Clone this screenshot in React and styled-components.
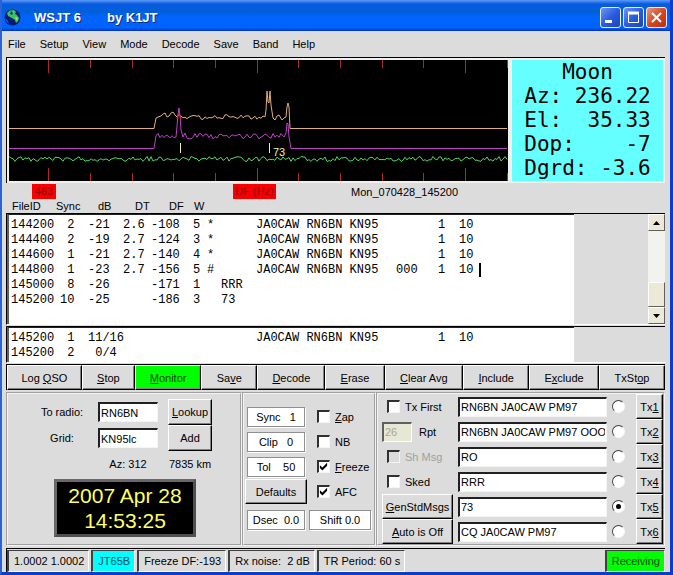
import React, { useState } from "react";
import styled, { createGlobalStyle } from "styled-components";

const GlobalStyle = createGlobalStyle`
    * {
        box-sizing: border-box;
    }

    body {
        margin: 0;
        background: #dcdcdc;
        font-family: "Liberation Sans", Arial, sans-serif;
        font-size: 11px;
        color: #000;
    }

    button, input {
        font: inherit;
        color: inherit;
        margin: 0;
    }
`

const Window = styled.div`
    display: flex;
    flex-direction: column;
    min-height: 100vh;
    background: #dcdcdc;
    border: solid #0c3cc8;
    border-width: 0 3px 4px 2px;
    border-left-color: #2a62d8;
`

const TitleBar = styled.header`
    display: flex;
    align-items: center;
    height: 31px;
    padding: 4px 3px 0 2px;
    background: linear-gradient(#5a9cf8 0, #0a5ae0 4px, #0060d8 12px, #0064ff 17px, #0062fc 28px, #0030b8 31px);
`

const Title = styled.h1`
    display: flex;
    flex: 1;
    gap: 26px;
    margin: 0 0 0 13px;
    color: #fff;
    font-size: 13px;
    line-height: 16px;
    text-shadow: 1px 1px #0a2a80;
`

const WinButtons = styled.div`
    display: flex;
    gap: 2px;
`

const WinButton = styled.button`
    display: flex;
    width: 21px;
    height: 21px;
    padding: 0;
    border: 1px solid #e8f0ff;
    border-radius: 3px;
    background: ${p => p.$close
        ? "linear-gradient(135deg, #e89880, #d84820 50%, #b83010)"
        : "linear-gradient(135deg, #7098f0, #2a5ce0 50%, #1c44b8)"};
`

const MenuBar = styled.nav`
    display: flex;
    gap: 14px;
    height: 26px;
    padding-left: 6px;
`

const MenuItem = styled.button`
    padding: 0;
    border: 0;
    background: none;
`

const Main = styled.main`
    display: flex;
    flex: 1;
    flex-direction: column;
    padding: 0 5px 0 4px;
`

const Sky = styled.section`
    display: flex;
    gap: 4px;
    padding: 2px;
    border-top: 1px solid #000;
    border-left: 1px solid #000;
    background: #f0f0ec;
`

const Spectrum = styled.div`
    flex: 1;
    height: 121px;
    overflow: hidden;
    background: #000;

    svg {
        display: block;
    }
`

const Moon = styled.div`
    width: 151px;
    background: #66ffff;
    font-family: "DejaVu Sans Mono", monospace;
    font-size: 21px;
    line-height: 24px;
    text-align: center;
    white-space: pre;
`

const PlotLabels = styled.div`
    display: flex;
    align-items: center;
    height: 17px;
    padding-left: 26px;
`

const RedLabel = styled.span`
    width: ${p => p.$width}px;
    margin-right: ${p => p.$after}px;
    background: #f80000;
    color: #900000;
    line-height: 15px;
    text-align: center;
`

const ColumnHeads = styled.div`
    display: grid;
    grid-template-columns: 44px 42px 37px 34px 25px 1fr;
    padding-left: 6px;
    line-height: 13px;
`

const TextBox = styled.div`
    display: flex;
    height: ${p => p.$height}px;
    border-top: 1px solid #000;
    border-left: 1px solid #000;
    border-bottom: 1px solid #fff;
    margin-bottom: 1px;
`

const TextArea = styled.div`
    width: 567px;
    padding: 3px 2px;
    border-top: 1px solid #202020;
    border-left: 2px solid #606060;
    background: #fff;
`

const Lines = styled.table`
    table-layout: fixed;
    border-collapse: collapse;
    width: 100%;
    font-family: "Liberation Mono", "Courier New", monospace;
    font-size: 12px;
    line-height: 15px;

    td {
        padding: 0;
        white-space: pre;
    }
`

const Caret = styled.span`
    display: inline-block;
    width: 2px;
    height: 14px;
    margin-left: 6px;
    background: #000;
    vertical-align: top;
`

const ScrollBar = styled.div`
    display: flex;
    flex-direction: column;
    width: 17px;
    margin-left: auto;
    background: #f2f2ee;
`

const ScrollPart = styled.button`
    display: flex;
    align-items: center;
    justify-content: center;
    height: ${p => p.$height}px;
    margin-top: ${p => p.$last ? "auto" : "0"};
    padding: 0;
    border: 1px solid;
    border-color: #fff #606060 #606060 #fff;
    background: #ece9d8;
`

const ButtonBar = styled.div`
    display: flex;
    height: 26px;
    margin-bottom: 2px;
    border-top: 1px solid #000;
    border-left: 1px solid #000;
`

const Button = styled.button`
    padding: 0;
    border: 1px solid;
    border-color: #fff #000 #000 #fff;
    box-shadow: inset -1px -1px #808080;
    background: #dcdcdc;
    white-space: nowrap;
`

const BarButton = styled(Button)`
    flex: ${p => p.$grow} 1 0;
    background: ${p => p.$on ? "#00ff00" : "#dcdcdc"};
    color: ${p => p.$on ? "#004800" : "#000"};
`

const Panels = styled.div`
    display: grid;
    grid-template-columns: 236fr 134fr 289fr;
    margin-bottom: 2px;
`

const Panel = styled.section`
    min-width: 0;
    border: 2px groove #f4f4f4;
`

const StationGrid = styled.div`
    display: grid;
    grid-template-columns: 52px 60px 44px;
    grid-auto-rows: 26px;
    gap: 0 10px;
    align-items: center;
    justify-content: center;
    justify-items: center;
    padding-top: 5px;

    ${Button} {
        width: 44px;
        height: 26px;
    }
`

const Entry = styled.input`
    width: 100%;
    min-width: 0;
    height: 20px;
    padding: 0 1px;
    border: solid;
    border-width: 2px 1px 1px 2px;
    border-color: #202020 #f4f4f4 #f4f4f4 #202020;
    border-radius: 0;
    background: #fff;

    &:disabled {
        border-color: #606060 #fff #fff #606060;
        background: #e8e6d4;
        color: #a8a698;
    }
`

const Clock = styled.time`
    display: block;
    width: 142px;
    margin: 2px auto 0 46px;
    padding: 1px 0;
    border: 3px solid;
    border-color: #686868 #505050 #505050 #686868;
    background: #000;
    color: #ffff66;
    font-size: 21px;
    line-height: 25px;
    text-align: center;
`

const DecodeGrid = styled.div`
    display: grid;
    grid-template-columns: 62px 1fr;
    grid-auto-rows: 25px;
    column-gap: 5px;
    align-items: center;
    padding: 10px 1px 0 1px;

    ${Button} {
        height: 25px;
    }
`

const Readout = styled.div`
    margin: 0 2px;
    border: 1px solid #909090;
    box-shadow: 1px 1px #fff;
    background: #fff;
    line-height: 18px;
    text-align: center;
    white-space: pre;
`

const BottomPair = styled.div`
    display: grid;
    grid-template-columns: 62px 1fr;
    padding: 6px 1px;
`

const CheckLabel = styled.label`
    display: flex;
    align-items: center;
    gap: 5px;
    padding-left: 5px;
    white-space: nowrap;
    color: ${p => p.$off ? "#a0a0a0" : "#000"};
`

const CheckBox = styled.input.attrs({ type: "checkbox" })`
    appearance: none;
    display: flex;
    width: 13px;
    height: 13px;
    border: solid;
    border-width: 2px 1px 1px 2px;
    border-color: #303030 #f4f4f4 #f4f4f4 #303030;
    background: #fff;

    &:disabled {
        background: #dcdcdc;
    }

    &:checked::after {
        content: "";
        width: 9px;
        height: 9px;
        background: #000;
        clip-path: polygon(10% 35%, 38% 60%, 90% 8%, 90% 42%, 38% 95%, 10% 68%);
    }
`

const Radio = styled.input.attrs({ type: "radio" })`
    appearance: none;
    display: flex;
    align-items: center;
    justify-content: center;
    width: 13px;
    height: 13px;
    border: 1px solid;
    border-color: #404040 #f8f8f8 #f8f8f8 #404040;
    border-radius: 50%;
    background: #fff;

    &:checked::after {
        content: "";
        width: 5px;
        height: 5px;
        border-radius: 50%;
        background: #000;
    }
`

const TxGrid = styled.div`
    display: grid;
    grid-template-columns: 71px 1fr 19px 27px;
    grid-auto-rows: 25px;
    column-gap: 5px;
    align-items: center;
    padding-left: 4px;

    ${Button} {
        height: 25px;
    }
`

const Report = styled.label`
    display: flex;
    align-items: center;
    gap: 7px;

    ${Entry} {
        width: 30px;
    }
`

const StatusBar = styled.footer`
    display: flex;
    gap: 2px;
    height: 24px;
    padding-top: 1px;
    border-top: 1px solid #000;
    border-left: 1px solid #000;
`

const StatusCell = styled.div`
    padding: 0 4px 0 5px;
    margin-left: ${p => p.$last ? "auto" : "0"};
    border: solid;
    border-width: 1px 1px 1px 2px;
    border-color: #404040 #fff #fff #404040;
    background: ${p => p.$color || "#dcdcdc"};
    color: ${p => p.$ink || "#000"};
    line-height: 20px;
    white-space: pre;
`

const menus = ["File", "Setup", "View", "Mode", "Decode", "Save", "Band", "Help"]

const widths = [49, 28, 35, 28, 42, 14, 14, 35, 140, 42, 21]

const decodes = [
    ["144200", " 2", "-21", "2.6", "-108", "5", "*", "", "JA0CAW RN6BN KN95", "", "1", "10"],
    ["144400", " 2", "-19", "2.7", "-124", "3", "*", "", "JA0CAW RN6BN KN95", "", "1", "10"],
    ["144600", " 1", "-21", "2.7", "-140", "4", "*", "", "JA0CAW RN6BN KN95", "", "1", "10"],
    ["144800", " 1", "-23", "2.7", "-156", "5", "#", "", "JA0CAW RN6BN KN95", "000", "1", "10"],
    ["145000", " 8", "-26", "", "-171", "1", "", "RRR", "", "", "", ""],
    ["145200", "10", "-25", "", "-186", "3", "", "73", "", "", "", ""],
]

const averages = [
    ["145200", " 1", "11/16", "", "", "", "", "", "JA0CAW RN6BN KN95", "", "1", "10"],
    ["145200", " 2", " 0/4", "", "", "", "", "", "", "", "", ""],
]

// label, underlined letter index, share of the bar
const actions = [
    ["Log QSO", 4, 75],
    ["Stop", 0, 53],
    ["Monitor", 0, 66],
    ["Save", 2, 56],
    ["Decode", 0, 68],
    ["Erase", 0, 59],
    ["Clear Avg", 0, 79],
    ["Include", 0, 66],
    ["Exclude", 1, 70],
    ["TxStop", 4, 66],
]

const messages = ["RN6BN JA0CAW PM97", "RN6BN JA0CAW PM97 OOO", "RO", "RRR", "73", "CQ JA0CAW PM97"]

const ticks = [39, 81, 123, 164, 206, 248, 289, 331, 373, 414, 456, 498]

// repeatable noise so the traces don't jump on every render
const trace = (from, to, level, amp, seed) => {
    let n = seed
    const pts = []
    for (let x = from; x <= to; x += 2) {
        n = (n * 16807) % 2147483647
        pts.push(`${x},${(level + (n / 2147483647 - 0.5) * amp).toFixed(1)}`)
    }
    return pts.join(" ")
}

const orange = `0,68.5 145,68.5 147,58 149,57 152,56 154,54 156,53 158,57 160,56 162,53 164,52 166,55 168,57 ${trace(170, 256, 57, 5, 71)} 257,50 258,31 259,42 260,43 261,31 262,45 264,58 266,60 268,56 270,55 273,60 275,58 277,57 278,47 279,43 280,47 281,68.5 498,68.5`
const magenta = `0,88.5 145,88.5 147,76 ${trace(149, 165, 76, 5, 911)} 167,77 168,66 169,55 170,48 171,56 172,70 174,77 ${trace(176, 272, 76, 6, 37)} 275,77 277,73 278,63 279,64 280,77 282,88.5 498,88.5`

const Underlined = ({ text, at }) => (
    <>{text.slice(0, at)}<u>{text[at]}</u>{text.slice(at + 1)}</>
)

const Globe = () => (
    <svg width="17" height="17" viewBox="0 0 17 17" aria-hidden="true">
        <circle cx="8.5" cy="8.5" r="8" fill="#0a1a70" />
        <path d="M1 9 L4 12 L5 15 L2 12Z" fill="#2858d8" />
        <path d="M3 4 L6 1.5 L10 1 L12 3 L11 5 L13 6 L15 9 L14 12 L12 14 L11 11 L8 9 L6 8 L4 7Z" fill="#38c858" />
        <path d="M7 2 L9 4 L8 6 L6 5Z" fill="#0a3a90" />
        <path d="M12 8 L14 9 L13 12 L11 9Z" fill="#80e890" />
    </svg>
)

const SpectrumPlot = () => (
    <Spectrum>
        <svg width="500" height="121" viewBox="0 0 500 121" fill="none">
            {ticks.map((x, i) => {
                const len = i % 5 === 0 ? 13 : 8
                return <path key={x} d={`M${x}.5 0v${len}M${x}.5 ${121 - len}v${len}`} stroke="#b02820" />
            })}
            <polyline points={trace(0, 498, 99, 5, 1234)} stroke="#50d860" />
            <polyline points={orange} stroke="#e0b078" />
            <polyline points={magenta} stroke="#c040c8" />
            <path d="M168 59L169 55H171L172 59" stroke="#e03028" />
            <path d="M171.5 83v10M260.5 83v10" stroke="#f0f0b0" />
            <text x="264" y="96" fill="#f0f0b0" fontSize="11">73</text>
        </svg>
    </Spectrum>
)

const LineTable = ({ rows, caretRow }) => (
    <Lines>
        <colgroup>
            {widths.map((w, i) => <col key={i} style={{ width: w }} />)}
            <col />
        </colgroup>
        <tbody>
            {rows.map((row, i) => (
                <tr key={i}>
                    {row.map((cell, j) => (
                        <td key={j}>{cell}{i === caretRow && j === row.length - 1 && <Caret />}</td>
                    ))}
                </tr>
            ))}
        </tbody>
    </Lines>
)

const Check = ({ text, at, checked, disabled }) => (
    <CheckLabel $off={disabled}>
        <CheckBox defaultChecked={checked} disabled={disabled} />
        <span>{at === undefined ? text : <Underlined text={text} at={at} />}</span>
    </CheckLabel>
)

const TxPanel = () => {
    const [next, setNext] = useState(4)

    const left = [
        <Check text="Tx First" />,
        <Report><Entry defaultValue="26" disabled />Rpt</Report>,
        <Check text="Sh Msg" disabled />,
        <Check text="Sked" />,
        <Button><Underlined text="GenStdMsgs" at={0} /></Button>,
        <Button><Underlined text="Auto is Off" at={0} /></Button>,
    ]

    return (
        <Panel>
            <TxGrid>
                {messages.map((msg, i) => (
                    <React.Fragment key={i}>
                        {left[i]}
                        <Entry defaultValue={msg} aria-label={`Message ${i + 1}`} />
                        <Radio name="tx" checked={next === i} onChange={() => setNext(i)} aria-label={`Send Tx${i + 1} next`} />
                        <Button><Underlined text={`Tx${i + 1}`} at={2} /></Button>
                    </React.Fragment>
                ))}
            </TxGrid>
        </Panel>
    )
}

const App = () => {
    return (
        <Window>
            <GlobalStyle />
            <TitleBar>
                <Globe />
                <Title><span>WSJT 6</span><span>by K1JT</span></Title>
                <WinButtons>
                    <WinButton aria-label="Minimize">
                        <svg width="19" height="19"><path d="M4 13.5h7" stroke="#fff" strokeWidth="3" /></svg>
                    </WinButton>
                    <WinButton aria-label="Maximize">
                        <svg width="19" height="19"><path d="M4.5 4v10.5h10V4M4 5.5h11" fill="none" stroke="#fff" /><path d="M4 5h11" stroke="#fff" strokeWidth="3" /></svg>
                    </WinButton>
                    <WinButton $close aria-label="Close">
                        <svg width="19" height="19"><path d="M5 5l9 9M14 5l-9 9" stroke="#fff" strokeWidth="2" /></svg>
                    </WinButton>
                </WinButtons>
            </TitleBar>
            <MenuBar>
                {menus.map(m => <MenuItem key={m}>{m}</MenuItem>)}
            </MenuBar>
            <Main>
                <Sky>
                    <SpectrumPlot />
                    <Moon>{"Moon\nAz: 236.22\nEl:  35.33\nDop:    -7\nDgrd: -3.6"}</Moon>
                </Sky>
                <PlotLabels>
                    <RedLabel $width={24} $after={177}>463</RedLabel>
                    <RedLabel $width={43} $after={75}>DF (Hz)</RedLabel>
                    <span>Mon_070428_145200</span>
                </PlotLabels>
                <ColumnHeads>
                    <span>FileID</span>
                    <span>Sync</span>
                    <span>dB</span>
                    <span>DT</span>
                    <span>DF</span>
                    <span>W</span>
                </ColumnHeads>
                <TextBox $height={112}>
                    <TextArea><LineTable rows={decodes} caretRow={3} /></TextArea>
                    <ScrollBar>
                        <ScrollPart $height={17} aria-label="Scroll up">
                            <svg width="7" height="4"><path d="M0 4L3.5 0L7 4Z" /></svg>
                        </ScrollPart>
                        <ScrollPart $height={25} $last aria-label="Scroll position" />
                        <ScrollPart $height={17} aria-label="Scroll down">
                            <svg width="7" height="4"><path d="M0 0L3.5 4L7 0Z" /></svg>
                        </ScrollPart>
                    </ScrollBar>
                </TextBox>
                <TextBox $height={37}>
                    <TextArea><LineTable rows={averages} /></TextArea>
                </TextBox>
                <ButtonBar>
                    {actions.map(([text, at, grow]) => (
                        <BarButton key={text} $grow={grow} $on={text === "Monitor"}>
                            <Underlined text={text} at={at} />
                        </BarButton>
                    ))}
                </ButtonBar>
                <Panels>
                    <Panel>
                        <StationGrid>
                            <label htmlFor="radio">To radio:</label>
                            <Entry id="radio" defaultValue="RN6BN" />
                            <Button><Underlined text="Lookup" at={0} /></Button>
                            <label htmlFor="grid">Grid:</label>
                            <Entry id="grid" defaultValue="KN95lc" />
                            <Button>Add</Button>
                            <span />
                            <span>Az: 312</span>
                            <span>7835 km</span>
                        </StationGrid>
                        <Clock>2007 Apr 28<br />14:53:25</Clock>
                    </Panel>
                    <Panel>
                        <DecodeGrid>
                            <Readout>{"Sync   1"}</Readout>
                            <Check text="Zap" at={0} />
                            <Readout>{"Clip   0"}</Readout>
                            <Check text="NB" />
                            <Readout>{"Tol    50"}</Readout>
                            <Check text="Freeze" at={0} checked />
                            <Button>Defaults</Button>
                            <Check text="AFC" checked />
                        </DecodeGrid>
                        <BottomPair>
                            <Readout>{"Dsec  0.0"}</Readout>
                            <Readout>Shift 0.0</Readout>
                        </BottomPair>
                    </Panel>
                    <TxPanel />
                </Panels>
                <StatusBar>
                    <StatusCell>1.0002 1.0002</StatusCell>
                    <StatusCell $color="#00ffff" $ink="#004c5c">JT65B</StatusCell>
                    <StatusCell>Freeze DF:-193</StatusCell>
                    <StatusCell>{"Rx noise:  2 dB"}</StatusCell>
                    <StatusCell>TR Period: 60 s</StatusCell>
                    <StatusCell $last $color="#00ff00" $ink="#004800">Receiving</StatusCell>
                </StatusBar>
            </Main>
        </Window>
    )
}

export default App
